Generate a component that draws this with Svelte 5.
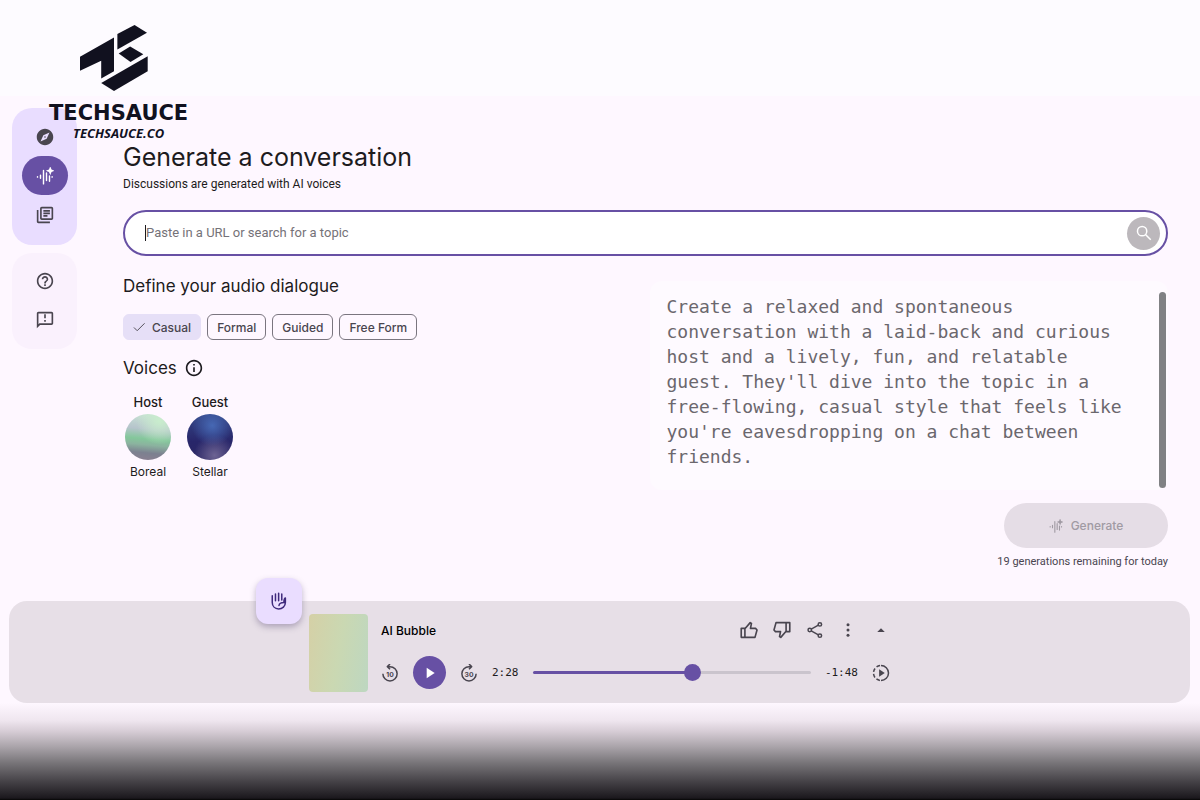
<script>
  const styles = ['Casual', 'Formal', 'Guided', 'Free Form'];

  const voices = [
    { role: 'Host',  name: 'Boreal',  tone: 'boreal'  },
    { role: 'Guest', name: 'Stellar', tone: 'stellar' },
  ];

  const total = 256;

  let selected = $state('Casual');
  let topic    = $state('');
  let position = $state(148);
  let prompt   = $state(
    "Create a relaxed and spontaneous conversation with a laid-back and curious host and a lively, fun, and relatable guest. They'll dive into the topic in a free-flowing, casual style that feels like you're eavesdropping on a chat between friends."
  );

  let played = $derived((position / total) * 100);

  function clock(seconds) {
    return Math.floor(seconds / 60) + ':' + String(seconds % 60).padStart(2, '0');
  }
</script>

{#snippet wave()}
  <svg viewBox="0 0 24 24" aria-hidden="true">
    <path d="M2 13v.5M6 11v4M10 4.500v18M14 8v10M18 12v7M21.500 13v.5" fill="none" stroke="currentColor" stroke-width="1.900" stroke-linecap="round" />
    <path d="M19 -1l1.700 4.300L25 5l-4.300 1.700L19 11l-1.700-4.300L13 5l4.300-1.700z" fill="currentColor" />
  </svg>
{/snippet}

{#snippet thumb()}
  <path d="M2.500 10H7v11H2.500zM7 10.500L13.500 3l1.500 1-1.200 6H20l1.800 2-2.500 9H7" class="outline" />
{/snippet}

<div class="page">
  <header>
    <a href="#home" class="brand">
      <svg viewBox="240 76 202 196" aria-hidden="true">
        <path d="M240 170L341 113V213L303 235V182L240 212Z" />
        <path d="M351 103L402 76L439 99L351 149Z" />
        <path d="M355 161L389 140L428 163L390 186Z" />
        <path d="M303 248L441 169V213L341 272Z" />
      </svg>
      <span class="brand-name">TECHSAUCE</span>
      <span class="brand-site">TECHSAUCE.CO</span>
    </a>
  </header>

  <div class="shell">
    <aside>
      <nav class="group primary" aria-label="Main">
        <a href="#explore" aria-label="Explore">
          <svg viewBox="0 0 24 24"><path d="M12 10.9c-.61 0-1.100.49-1.100 1.100s.49 1.100 1.100 1.100c.61 0 1.100-.49 1.100-1.100s-.49-1.100-1.100-1.100zM12 1C5.900 1 1 5.900 1 12s4.900 11 11 11 11-4.900 11-11S18.100 1 12 1zm2.190 13.190L6 18l3.810-8.190L18 6l-3.810 8.190z" /></svg>
        </a>
        <a href="#generate" class="active" aria-label="Generate">{@render wave()}</a>
        <a href="#library" aria-label="Library">
          <svg viewBox="1 1 22 22"><path d="M4 6H2v14c0 1.100.9 2 2 2h14v-2H4V6zm16-4H8c-1.100 0-2 .9-2 2v12c0 1.100.9 2 2 2h12c1.100 0 2-.9 2-2V4c0-1.100-.9-2-2-2zm0 14H8V4h12v12zM10 9h8v2h-8zm0 3h5v2h-5zm0-6h8v2h-8z" /></svg>
        </a>
      </nav>
      <nav class="group secondary" aria-label="Support">
        <a href="#help" aria-label="Help">
          <svg viewBox="1 1 22 22"><path d="M11 18h2v-2h-2v2zm1-16C6.480 2 2 6.480 2 12s4.480 10 10 10 10-4.480 10-10S17.520 2 12 2zm0 18c-4.410 0-8-3.590-8-8s3.590-8 8-8 8 3.590 8 8-3.590 8-8 8zm0-14c-2.210 0-4 1.790-4 4h2c0-1.100.9-2 2-2s2 .9 2 2c0 2-3 1.750-3 5h2c0-2.250 3-2.500 3-5 0-2.210-1.790-4-4-4z" /></svg>
        </a>
        <a href="#feedback" aria-label="Feedback">
          <svg viewBox="1 1 22 22"><path d="M20 2H4c-1.100 0-2 .9-2 2v18l4-4h14c1.100 0 2-.9 2-2V4c0-1.100-.9-2-2-2zm0 14H5.170L4 17.170V4h16v12zm-9-4h2v2h-2zm0-7h2v5h-2z" /></svg>
        </a>
      </nav>
    </aside>

    <main>
      <h1>Generate a conversation</h1>
      <p class="lead">Discussions are generated with AI voices</p>

      <form class="search">
        <span class="caret"></span>
        <input type="text" bind:value={topic} aria-label="Topic or URL" placeholder="Paste in a URL or search for a topic" />
        <button type="button" aria-label="Search">
          <svg viewBox="0 0 24 24"><circle cx="9.500" cy="9.500" r="6.200" /><path d="M14 14l7 7" /></svg>
        </button>
      </form>

      <div class="columns">
        <section>
          <h2>Define your audio dialogue</h2>
          <div class="chips">
            {#each styles as style}
              <button type="button" class="chip" class:selected={selected === style} aria-pressed={selected === style} onclick={() => (selected = style)}>
                {#if selected === style}
                  <svg viewBox="0 0 14 12" aria-hidden="true"><path d="M1 6.500L4.500 10 12.500 2" /></svg>
                {/if}
                {style}
              </button>
            {/each}
          </div>

          <h2 class="voices-title">
            Voices
            <svg viewBox="1 1 22 22" aria-hidden="true"><path d="M11 7h2v2h-2zm0 4h2v6h-2zm1-9C6.480 2 2 6.480 2 12s4.480 10 10 10 10-4.480 10-10S17.520 2 12 2zm0 18c-4.410 0-8-3.590-8-8s3.590-8 8-8 8 3.590 8 8-3.590 8-8 8z" /></svg>
          </h2>
          <div class="voices">
            {#each voices as { role, name, tone }}
              <div class="voice">
                <span class="role">{role}</span>
                <button type="button" class="orb {tone}" aria-label="{role} voice: {name}"></button>
                <span class="name">{name}</span>
              </div>
            {/each}
          </div>
        </section>

        <section>
          <div class="prompt">
            <textarea bind:value={prompt} aria-label="Dialogue instructions" rows="7" spellcheck="false"></textarea>
            <span class="scrollbar"></span>
          </div>
          <div class="submit">
            <button type="button" class="generate" disabled>
              {@render wave()}
              Generate
            </button>
            <p>19 generations remaining for today</p>
          </div>
        </section>
      </div>
    </main>
  </div>

  <div class="player">
    <div class="player-inner">
      <button type="button" class="raise" aria-label="Join the conversation">
        <svg viewBox="0 0 24 24" aria-hidden="true">
          <path d="M3 5v9c0 5 3.500 8.500 8.500 8.500s9-3.500 9-8.500V8M7.300 2.500v9M11.500 1.500v10M15.700 2.500v8M20.500 8c-1.500.5-2 2-2 6-3.500 0-6 1-6.500 4" />
        </svg>
      </button>
      <div class="cover"></div>

      <div class="details">
        <div class="top">
          <span class="track">AI Bubble</span>
          <div class="actions">
            <button type="button" aria-label="Like">
              <svg viewBox="1 1 22 22">{@render thumb()}</svg>
            </button>
            <button type="button" aria-label="Dislike">
              <svg viewBox="1 1 22 22"><g transform="rotate(180 12 12)">{@render thumb()}</g></svg>
            </button>
            <button type="button" aria-label="Share">
              <svg viewBox="0 0 24 24" class="outline">
                <path d="M16.500 5.600L7 10.900M7 13.100l9.500 5.300" />
                <circle cx="18.500" cy="4.500" r="2.300" /><circle cx="5" cy="12" r="2.300" /><circle cx="18.500" cy="19.500" r="2.300" />
              </svg>
            </button>
            <button type="button" aria-label="More">
              <svg viewBox="0 0 24 24"><circle cx="12" cy="5" r="2" /><circle cx="12" cy="12" r="2" /><circle cx="12" cy="19" r="2" /></svg>
            </button>
            <button type="button" aria-label="Expand">
              <svg viewBox="0 0 24 24"><path d="M7 14.500l5-5 5 5z" /></svg>
            </button>
          </div>
        </div>

        <div class="controls">
          <button type="button" aria-label="Back 10 seconds">
            <svg viewBox="0 0 24 24">
              <path d="M2.500 13a9.500 9.500 0 1 0 9.500-9.500H8M12 0L8.500 3.500 12 7" class="outline" />
              <text x="12" y="17" text-anchor="middle">10</text>
            </svg>
          </button>
          <button type="button" class="play" aria-label="Play">
            <svg viewBox="0 0 24 24"><path d="M7 4v16l12-8z" /></svg>
          </button>
          <button type="button" aria-label="Forward 30 seconds">
            <svg viewBox="0 0 24 24">
              <path d="M21.500 13a9.500 9.500 0 1 1-9.500-9.500h4M12 0l3.500 3.500L12 7" class="outline" />
              <text x="12" y="17" text-anchor="middle">30</text>
            </svg>
          </button>
          <span class="time">{clock(position)}</span>
          <input type="range" min="0" max={total} bind:value={position} aria-label="Seek" style="--played: {played}%" />
          <span class="time">-{clock(total - position)}</span>
          <button type="button" aria-label="Playback speed">
            <svg viewBox="0 0 24 24">
              <path d="M12 2a10 10 0 0 1 0 20" class="outline" />
              <path d="M12 22a10 10 0 0 1 0-20" class="outline dashed" />
              <path d="M9.500 7v10l7.500-5z" />
            </svg>
          </button>
        </div>
      </div>
    </div>
  </div>

  <footer></footer>
</div>

<style>
  :global(body) {
    background: #fef7ff;
  }

  .page {
    min-height: 100vh;
    display: flex;
    flex-direction: column;
    position: relative;
    font-family: Inter, "Liberation Sans", sans-serif;
    color: #1d1b20;
  }

  h1, h2, p {
    margin: 0;
    font-weight: 400;
  }

  svg {
    display: block;
    width: 18px;
    height: 18px;
    fill: currentColor;
  }

  .outline {
    fill: none;
    stroke: currentColor;
    stroke-width: 2;
    stroke-linejoin: round;
  }

  .dashed {
    stroke-dasharray: 5 2.8;
    stroke-dashoffset: -1.5;
  }

  button {
    font: inherit;
    color: inherit;
    border: 0;
    padding: 0;
    background: none;
    cursor: pointer;
  }

  header {
    height: 96px;
    background: #fdfbff;
  }

  /* Brand mark sits over the side rail */
  .brand {
    position: absolute;
    top: 25px;
    left: 49px;
    z-index: 2;
    display: flex;
    flex-direction: column;
    align-items: center;
    color: #11111f;
    text-decoration: none;
  }

  .brand svg {
    width: 68px;
    height: 66px;
    margin-right: 9px;
  }

  .brand-name {
    margin-top: 10px;
    font: 700 21px/24px "DejaVu Sans", sans-serif;
  }

  .brand-site {
    font: italic 700 13px/16px "Open Sans", sans-serif;
  }

  .shell {
    display: flex;
    gap: 46px;
    padding: 12px 32px 31px 12px;
  }

  /* Side rail */
  aside {
    display: flex;
    flex-direction: column;
    gap: 8px;
    flex-shrink: 0;
  }

  .group {
    width: 65px;
    box-sizing: border-box;
    display: flex;
    flex-direction: column;
    align-items: center;
    border-radius: 20px;
    color: #49454f;
  }

  .group a {
    width: 46px;
    height: 39px;
    display: grid;
    place-items: center;
    border-radius: 20px;
    color: inherit;
  }

  .primary {
    padding: 9px 0 11px;
    background: #e9ddff;
  }

  .secondary {
    padding: 8px 0 10px;
    background: #faf1fd;
  }

  .group a.active {
    background: #6750a4;
    color: #fff;
  }

  /* Content */
  main {
    flex: 1;
    min-width: 0;
    padding-top: 32px;
  }

  h1 {
    font-size: 25px;
    line-height: 34px;
  }

  .lead {
    margin-top: 2px;
    font: 12px/16px Roboto, sans-serif;
  }

  .search {
    height: 46px;
    margin-top: 18px;
    padding: 0 6px 0 20px;
    box-sizing: border-box;
    display: flex;
    align-items: center;
    border: 2px solid #6750a4;
    border-radius: 23px;
    background: #fff;
  }

  .caret {
    width: 1px;
    height: 16px;
    background: #1d1b20;
  }

  .search input {
    flex: 1;
    min-width: 0;
    padding: 0;
    border: 0;
    outline: 0;
    background: none;
    font: 13px/20px Roboto, sans-serif;
    color: #1d1b20;
  }

  .search input::placeholder {
    color: #757278;
    opacity: 1;
  }

  .search button {
    width: 33px;
    height: 33px;
    display: grid;
    place-items: center;
    border-radius: 50%;
    background: #bcb8bc;
    color: #fff;
  }

  .search button svg {
    fill: none;
    stroke: currentColor;
    stroke-width: 2;
  }

  .columns {
    display: grid;
    grid-template-columns: 1fr 1fr;
    gap: 8px;
    margin-top: 18px;
  }

  h2 {
    font-size: 17px;
    line-height: 24px;
  }

  .columns section {
    min-width: 0;
  }

  .chips {
    display: flex;
    gap: 6px;
    margin-top: 16px;
  }

  .chip {
    height: 26px;
    display: flex;
    align-items: center;
    gap: 6px;
    padding: 0 9px;
    border: 1px solid #7a757f;
    border-radius: 6px;
    font-size: 12px;
    font-weight: 500;
    color: #49454f;
  }

  .chip.selected {
    border-color: #e6dff7;
    background: #e6dff7;
  }

  .chip svg {
    width: 13px;
    height: 12px;
    fill: none;
    stroke: currentColor;
  }

  .voices-title {
    display: flex;
    align-items: center;
    gap: 8px;
    margin-top: 16px;
  }

  .voices {
    display: flex;
    gap: 16px;
    margin-top: 14px;
    padding-left: 2px;
  }

  .voice {
    width: 46px;
    display: flex;
    flex-direction: column;
    align-items: center;
    gap: 4px;
    font-size: 12px;
    line-height: 16px;
  }

  .role {
    font-size: 13px;
    font-weight: 500;
  }

  .orb {
    width: 46px;
    height: 46px;
    border-radius: 50%;
  }

  .boreal {
    background:
      radial-gradient(circle at 75% 15%, #c9edcd 0%, rgba(201, 237, 205, 0) 45%),
      linear-gradient(185deg, #cbe6d6 0%, #b6c4cc 34%, #84c79b 54%, #8bb39f 66%, #7c8190 82%, #8b7f91 100%);
  }

  .stellar {
    background:
      radial-gradient(circle at 55% 25%, #4668b4 0%, rgba(70, 104, 180, 0) 48%),
      radial-gradient(circle at 60% 90%, #6d6393 0%, rgba(109, 99, 147, 0) 42%),
      linear-gradient(180deg, #344686 0%, #28266a 60%, #2b2763 100%);
  }

  .prompt {
    display: flex;
    justify-content: space-between;
    height: 209px;
    margin-top: 7px;
    border-radius: 12px;
    background: #fefaff;
  }

  .prompt textarea {
    width: 92%;
    box-sizing: border-box;
    padding: 13px 0 0 17px;
    border: 0;
    outline: 0;
    resize: none;
    overflow: hidden;
    background: none;
    font: 18px/25px "DejaVu Sans Mono", monospace;
    color: #6b676d;
  }

  .scrollbar {
    width: 7px;
    margin: 11px 2px 2px 0;
    border-radius: 4px;
    background: #808184;
  }

  .submit {
    display: flex;
    flex-direction: column;
    align-items: flex-end;
    gap: 6px;
    margin-top: 13px;
    font: 11px/16px Roboto, sans-serif;
    color: #49454f;
  }

  .generate {
    width: 164px;
    height: 45px;
    display: flex;
    align-items: center;
    justify-content: center;
    gap: 8px;
    border-radius: 23px;
    background: #e5dde6;
    font: 500 12px/16px Inter, sans-serif;
    color: #a09aa3;
  }

  .generate svg {
    width: 14px;
    height: 14px;
  }

  /* Player bar */
  .player {
    margin: 0 10px 0 9px;
    padding: 13px 16px 11px;
    border-radius: 18px;
    background: #e7dfe7;
  }

  .player-inner {
    position: relative;
    max-width: 581px;
    margin-inline: auto;
    display: flex;
    gap: 13px;
  }

  .raise {
    position: absolute;
    top: -36px;
    left: -53px;
    width: 46px;
    height: 46px;
    display: grid;
    place-items: center;
    border-radius: 12px;
    background: #eaddff;
    color: #3f2a7c;
    box-shadow: 0 3px 6px rgba(70, 55, 100, 0.35);
  }

  .raise svg {
    fill: none;
    stroke: currentColor;
    stroke-width: 2;
    stroke-linecap: round;
  }

  .cover {
    width: 59px;
    height: 78px;
    border-radius: 4px;
    background: linear-gradient(100deg, #d5d0a6 0%, #cad8b2 50%, #bdd7c1 100%);
  }

  .details {
    flex: 1;
    min-width: 0;
    padding-top: 6px;
  }

  .top,
  .actions,
  .controls {
    display: flex;
    align-items: center;
  }

  .top {
    justify-content: space-between;
    height: 20px;
    font-size: 12px;
    font-weight: 500;
    color: #000;
  }

  .actions {
    gap: 15px;
    color: #49454f;
  }

  .controls {
    gap: 14px;
    margin-top: 16px;
    color: #49454f;
  }

  .controls text {
    font: 700 9px Inter, "Liberation Sans", sans-serif;
  }

  .play {
    width: 33px;
    height: 33px;
    display: grid;
    place-items: center;
    border-radius: 50%;
    background: #6750a4;
    color: #fff;
  }

  .play svg {
    width: 16px;
    height: 16px;
  }

  .time {
    font: 11px/16px "DejaVu Sans Mono", monospace;
    color: #1d1b20;
  }

  input[type='range'] {
    flex: 1;
    min-width: 0;
    height: 17px;
    margin: 0;
    appearance: none;
    background: none;
  }

  input[type='range']::-webkit-slider-runnable-track {
    height: 3px;
    border-radius: 2px;
    background: linear-gradient(to right, #6750a4 var(--played), #cac4cd var(--played));
  }

  input[type='range']::-webkit-slider-thumb {
    appearance: none;
    width: 17px;
    height: 17px;
    margin-top: -7px;
    border-radius: 50%;
    background: #6750a4;
  }

  footer {
    flex: 1;
    min-height: 96px;
    background: linear-gradient(#fef7ff 0%, #efe6ef 18%, #d7cdd6 29%, #aaa4aa 45%, #777478 62%, #454247 81%, #1b181d 98%, #050505 100%);
  }
</style>
